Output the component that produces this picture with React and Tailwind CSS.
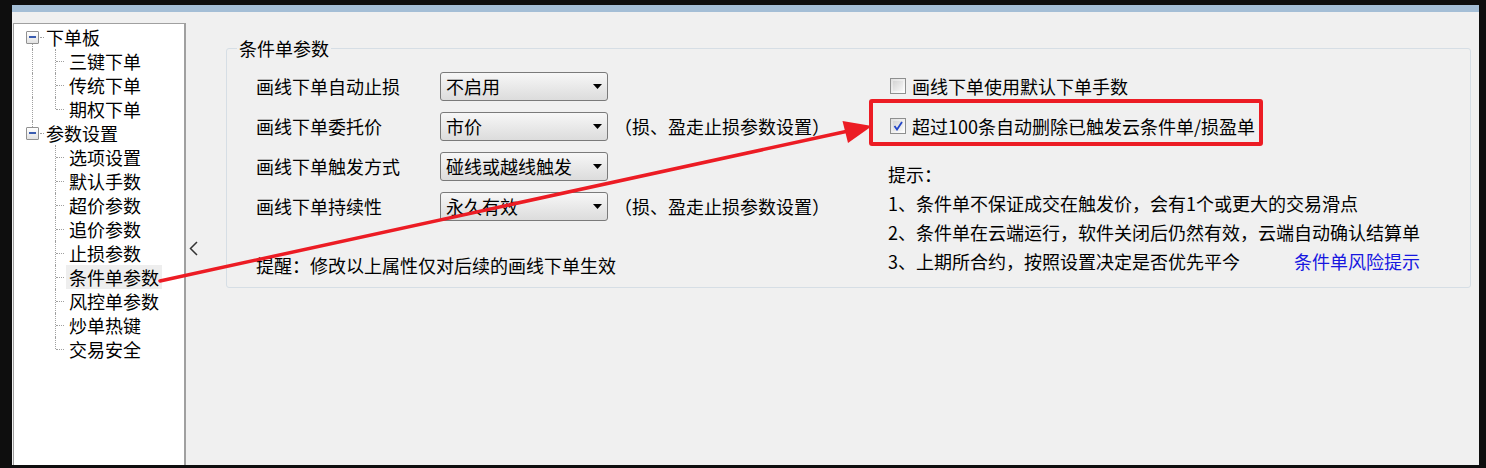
import React from "react";

const tree = [
  { label: "下单板", children: ["三键下单", "传统下单", "期权下单"] },
  {
    label: "参数设置",
    children: ["选项设置", "默认手数", "超价参数", "追价参数", "止损参数", "条件单参数", "风控单参数", "炒单热键", "交易安全"],
  },
];

const rows = [
  { label: "画线下单自动止损", value: "不启用", note: "" },
  { label: "画线下单委托价", value: "市价", note: "（损、盈走止损参数设置）" },
  { label: "画线下单触发方式", value: "碰线或越线触发", note: "" },
  { label: "画线下单持续性", value: "永久有效", note: "（损、盈走止损参数设置）" },
];

const dot = "border-dotted border-[#a0a0a0]";

function MinusBox() {
  return (
    <span className="w-[13px] h-[13px] shrink-0 border border-[#919191] rounded-[1px] bg-gradient-to-b from-white to-[#e2e2e2] flex items-center justify-center">
      <span className="w-[7px] h-[2px] bg-[#3a5cb0]" />
    </span>
  );
}

function Tree() {
  return (
    <div className="pt-px">
      {tree.map((g, gi) => {
        const lastGroup = gi === tree.length - 1;
        return (
          <div key={g.label}>
            <div className="relative h-[24px] flex items-center pl-[12px]">
              {gi > 0 && <span className={`absolute left-[18px] top-0 h-[6px] border-l ${dot}`} />}
              {!lastGroup && <span className={`absolute left-[18px] top-[19px] bottom-0 border-l ${dot}`} />}
              <MinusBox />
              <span className={`w-[4px] ml-px border-t ${dot}`} />
              <span className="ml-[2px] leading-[24px]">{g.label}</span>
            </div>
            {g.children.map((c, ci) => {
              const last = ci === g.children.length - 1;
              const active = c === "条件单参数";
              return (
                <div key={c} className="relative h-[24px] flex items-center pl-[55px]">
                  {!lastGroup && <span className={`absolute left-[18px] top-0 bottom-0 border-l ${dot}`} />}
                  <span className={`absolute left-[41px] top-0 ${last ? "h-[12px]" : "bottom-0"} border-l ${dot}`} />
                  <span className={`absolute left-[42px] top-[12px] w-[8px] border-t ${dot}`} />
                  <span className={`leading-[24px] ${active ? "bg-[#eeeeee] px-[3px] -ml-[3px]" : ""}`}>{c}</span>
                </div>
              );
            })}
          </div>
        );
      })}
    </div>
  );
}

function Select({ value }) {
  return (
    <div className="w-[168px] h-[29px] shrink-0 border border-[#7a7a7a] rounded-[3px] bg-gradient-to-b from-[#f7f7f7] to-[#dcdcdc] flex items-center justify-between pl-[5px] pr-[5px]">
      <span className="leading-[24px]">{value}</span>
      <svg width="9" height="5" viewBox="0 0 9 5">
        <polygon points="0,0 9,0 4.5,5" fill="#000" />
      </svg>
    </div>
  );
}

function Check({ checked }) {
  return (
    <span className="w-[16px] h-[16px] shrink-0 border border-[#8e8f8f] bg-gradient-to-br from-[#e0e0e0] to-white p-[2px] flex">
      <span className="flex-1 bg-gradient-to-br from-[#d4d4d4] to-[#f7f7f7] flex items-center justify-center">
        {checked && (
          <svg width="10" height="10" viewBox="0 0 10 10">
            <path d="M1.5 5 L4 8.5 L9 1" fill="none" stroke="#2346c8" strokeWidth="1.8" />
          </svg>
        )}
      </span>
    </span>
  );
}

export default function App() {
  return (
    <div className="relative w-[1486px] h-[468px] bg-[#0e0e0e] pt-[5px] pl-[12px] text-[18px] text-black font-['Noto_Sans_CJK_SC',sans-serif] overflow-hidden">
      <div className="w-[1467px] h-[460px] flex flex-col">
        <div className="h-[7px] bg-[#a4bed6]" />
        <div className="flex-1 bg-[#f0f0f0] flex">
          <div className="w-[173px] shrink-0 mt-[11px] ml-px bg-white border border-b-0 border-r-2 border-[#a0a0a0]">
            <Tree />
          </div>
          <div className="w-[40px] shrink-0 pt-[229px] pl-[3px]">
            <svg width="10" height="15" viewBox="0 0 10 15">
              <polyline points="8,1 1.5,7.5 8,14" fill="none" stroke="#333" strokeWidth="1.5" />
            </svg>
          </div>
          <div className="flex-1 pt-[24px] pr-[8px]">
            <fieldset className="border border-[#d6dee5] rounded-[3px] px-0">
              <legend className="ml-[10px] px-[2px] leading-[24px]">条件单参数</legend>
              <div className="flex">
                <div className="w-[661px] shrink-0 pl-[29px] pt-[6px] pb-[10px]">
                  {rows.map((r) => (
                    <div key={r.label} className="h-[40px] flex items-center">
                      <span className="w-[184px] shrink-0">{r.label}</span>
                      <Select value={r.value} />
                      {r.note && <span className="ml-[6px]">{r.note}</span>}
                    </div>
                  ))}
                  <div className="mt-[27px] h-[24px] leading-[24px]">提醒：修改以上属性仅对后续的画线下单生效</div>
                </div>
                <div className="flex-1 pt-[6px]">
                  <div className="h-[40px] flex items-center pl-[2px]">
                    <Check />
                    <span className="ml-[6px]">画线下单使用默认下单手数</span>
                  </div>
                  <div className="h-[40px] flex items-center pl-[2px]">
                    <Check checked />
                    <span className="ml-[6px]">超过100条自动删除已触发云条件单/损盈单</span>
                  </div>
                  <div className="mt-[14px] leading-[29px]">
                    <div>提示：</div>
                    <div>1、条件单不保证成交在触发价，会有1个或更大的交易滑点</div>
                    <div>2、条件单在云端运行，软件关闭后仍然有效，云端自动确认结算单</div>
                    <div className="w-[532px] flex justify-between">
                      <span>3、上期所合约，按照设置决定是否优先平今</span>
                      <span className="text-[#1717e0]">条件单风险提示</span>
                    </div>
                  </div>
                </div>
              </div>
            </fieldset>
          </div>
        </div>
      </div>

      <div className="absolute left-[869px] top-[99px] w-[394px] h-[47px] border-4 border-[#ec1c24] rounded-[3px] pointer-events-none" />
      <svg className="absolute inset-0 pointer-events-none" width="1486" height="468" viewBox="0 0 1486 468">
        <line x1="160" y1="281" x2="846" y2="131.5" stroke="#ec1c24" strokeWidth="3.5" strokeLinecap="round" />
        <polygon points="872,126 842.5,121 848,143" fill="#ec1c24" />
      </svg>
    </div>
  );
}
